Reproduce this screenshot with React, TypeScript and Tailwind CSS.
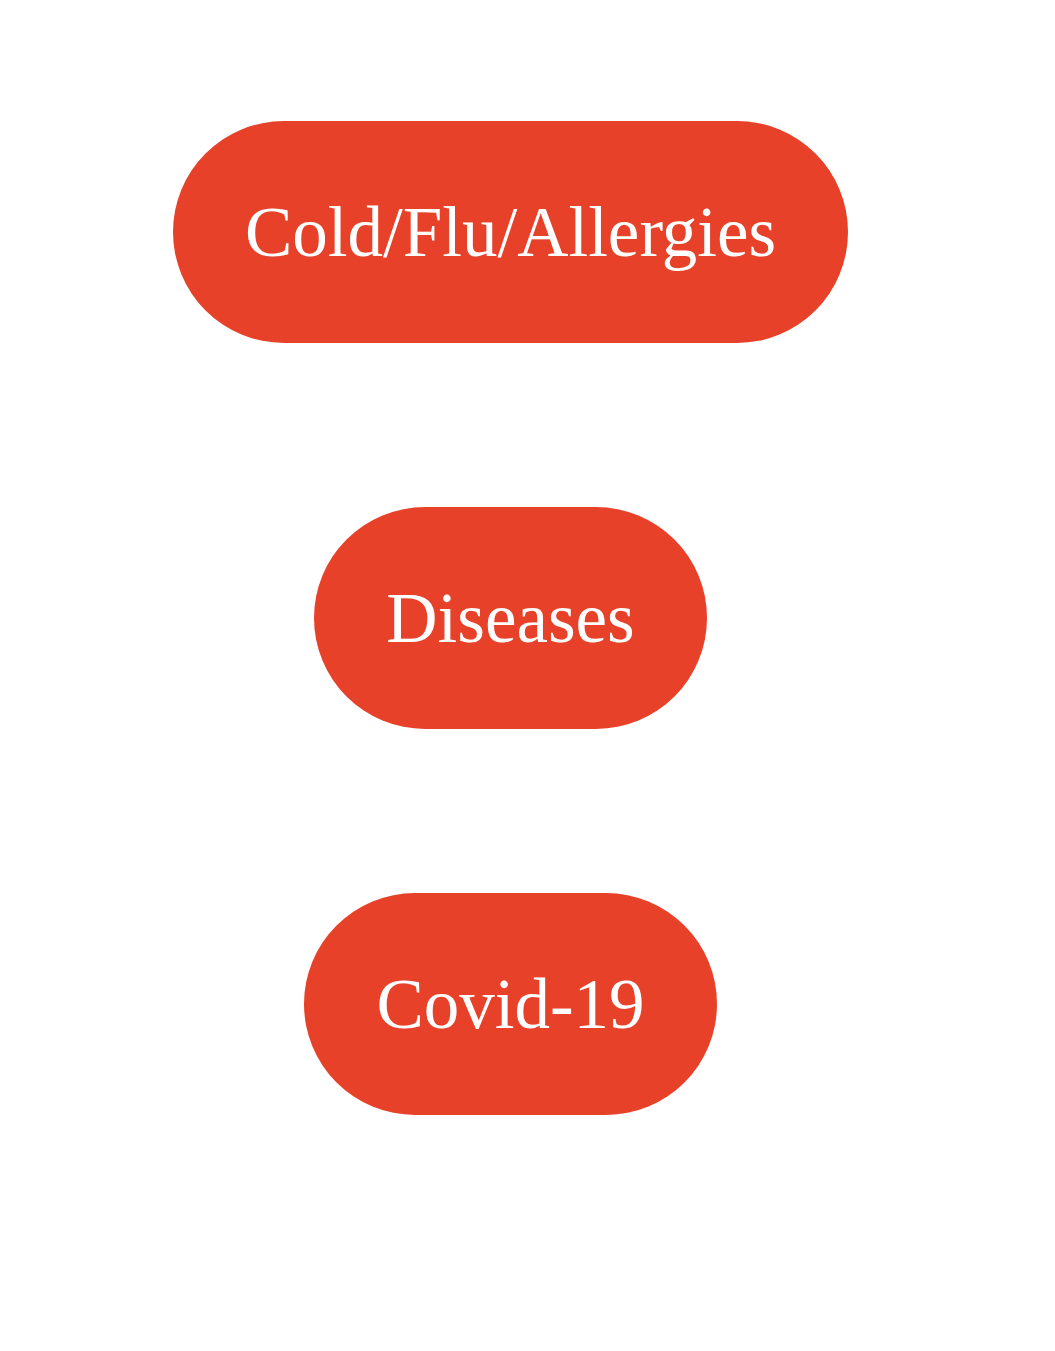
export default function App() {
  const items = ["Cold/Flu/Allergies", "Diseases", "Covid-19"];
  return (
    <div className="w-[1021px] min-h-[1351px] bg-white flex flex-col items-center pt-[121px] gap-[164px]">
      {items.map((t) => (
        <div
          key={t}
          className="rounded-full bg-[#e8412a] text-white px-[72px] py-[71px] text-[71px] leading-[80px] whitespace-nowrap font-['Liberation_Serif','Times_New_Roman',serif]"
        >
          {t}
        </div>
      ))}
    </div>
  );
}
